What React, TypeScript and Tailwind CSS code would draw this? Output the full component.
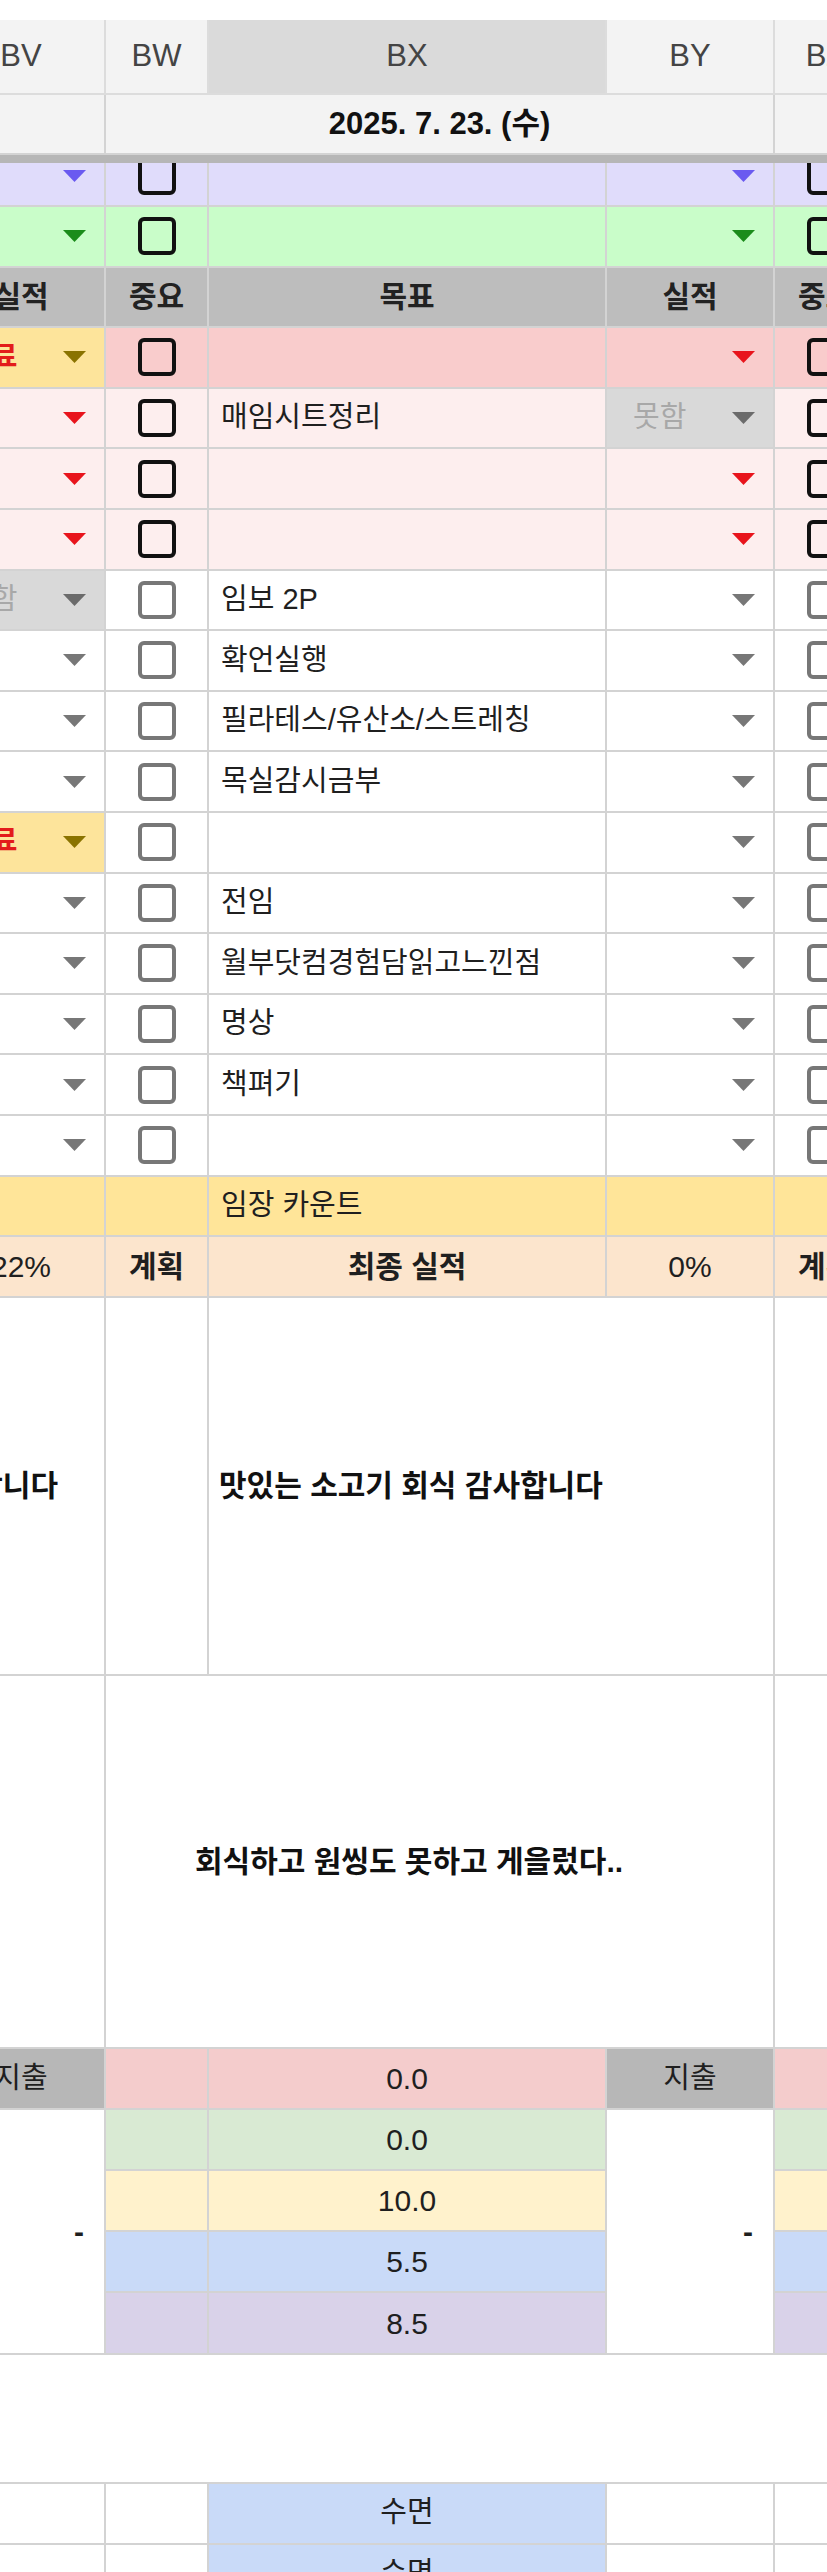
import type { ReactNode } from "react";

type Tone = "pink" | "light" | "white";
type Mark = "done" | "miss" | "none";

interface GoalRow {
  tone: Tone;
  bv: Mark;
  goal: string;
  by: Mark;
}

const goals: GoalRow[] = [
  { tone: "pink", bv: "done", goal: "", by: "none" },
  { tone: "light", bv: "none", goal: "매임시트정리", by: "miss" },
  { tone: "light", bv: "none", goal: "", by: "none" },
  { tone: "light", bv: "none", goal: "", by: "none" },
  { tone: "white", bv: "miss", goal: "임보 2P", by: "none" },
  { tone: "white", bv: "none", goal: "확언실행", by: "none" },
  { tone: "white", bv: "none", goal: "필라테스/유산소/스트레칭", by: "none" },
  { tone: "white", bv: "none", goal: "목실감시금부", by: "none" },
  { tone: "white", bv: "done", goal: "", by: "none" },
  { tone: "white", bv: "none", goal: "전임", by: "none" },
  { tone: "white", bv: "none", goal: "월부닷컴경험담읽고느낀점", by: "none" },
  { tone: "white", bv: "none", goal: "명상", by: "none" },
  { tone: "white", bv: "none", goal: "책펴기", by: "none" },
  { tone: "white", bv: "none", goal: "", by: "none" },
];

const toneBg: Record<Tone, string> = {
  pink: "bg-[#f9cccc]",
  light: "bg-[#fdeeee]",
  white: "bg-white",
};

// column widths incl. right gridline
const W = {
  bv: "w-[168px]",
  bw: "w-[103px]",
  bx: "w-[398px]",
  by: "w-[168px]",
  bz: "w-[103px]",
};

function Cell({
  w,
  bg = "bg-white",
  className = "",
  children,
}: {
  w: string;
  bg?: string;
  className?: string;
  children?: ReactNode;
}) {
  return (
    <div
      className={`${w} ${bg} shrink-0 h-full border-r-2 border-b-2 border-[#d3d3d3] flex items-center overflow-hidden ${className}`}
    >
      {children}
    </div>
  );
}

function Tri({ fill }: { fill: string }) {
  return (
    <svg width="23" height="12" viewBox="0 0 23 12" className="shrink-0">
      <polygon points="0,0 23,0 11.5,12" className={fill} />
    </svg>
  );
}

function Check({ dark }: { dark: boolean }) {
  return (
    <div
      className={`w-[38px] h-[38px] rounded-[6px] border-4 ${
        dark ? "border-[#111]" : "border-[#777]"
      }`}
    />
  );
}

function Dropdown({ w, mark, tone, triFill }: { w: string; mark: Mark; tone: Tone; triFill: string }) {
  if (mark === "done") {
    return (
      <Cell w={w} bg="bg-[#fde49b]" className="justify-between pl-[26px] pr-[18px]">
        <span className="text-[29px] font-bold text-[#e31b1b]">완료</span>
        <Tri fill="fill-[#8a7300]" />
      </Cell>
    );
  }
  if (mark === "miss") {
    return (
      <Cell w={w} bg="bg-[#d9d9d9]" className="justify-between pl-[26px] pr-[18px]">
        <span className="text-[29px] text-[#a8a8a8]">못함</span>
        <Tri fill="fill-[#6b6b6b]" />
      </Cell>
    );
  }
  return (
    <Cell w={w} bg={toneBg[tone]} className="justify-end pr-[18px]">
      <Tri fill={triFill} />
    </Cell>
  );
}

function Goal({ row }: { row: GoalRow }) {
  const dark = row.tone !== "white";
  const triFill = dark ? "fill-[#e8141c]" : "fill-[#777777]";
  const bg = toneBg[row.tone];
  return (
    <div className="flex h-[60.6px]">
      <Dropdown w={W.bv} mark={row.bv} tone={row.tone} triFill={triFill} />
      <Cell w={W.bw} bg={bg} className="justify-center">
        <Check dark={dark} />
      </Cell>
      <Cell w={W.bx} bg={bg} className="pl-[12px]">
        <span className="text-[29px] whitespace-nowrap">{row.goal}</span>
      </Cell>
      <Dropdown w={W.by} mark={row.by} tone={row.tone} triFill={triFill} />
      <Cell w={W.bz} bg={bg} className="justify-center">
        <Check dark={dark} />
      </Cell>
    </div>
  );
}

function ColorRow({ bg, tri, cb }: { bg: string; tri: string; cb: boolean }) {
  return (
    <div className="flex h-[60.6px]">
      <Cell w={W.bv} bg={bg} className="justify-end pr-[18px]">
        <Tri fill={tri} />
      </Cell>
      <Cell w={W.bw} bg={bg} className="justify-center">
        <Check dark={cb} />
      </Cell>
      <Cell w={W.bx} bg={bg} />
      <Cell w={W.by} bg={bg} className="justify-end pr-[18px]">
        <Tri fill={tri} />
      </Cell>
      <Cell w={W.bz} bg={bg} className="justify-center">
        <Check dark={cb} />
      </Cell>
    </div>
  );
}

export default function App() {
  return (
    <div className="w-[827px] h-[2572px] overflow-hidden bg-white text-[#1f1f1f] font-[family-name:Liberation_Sans,Noto_Sans_CJK_KR,sans-serif]">
      <div className="h-[20px]" />
      <div className="ml-[-62px] w-[940px]">
        {/* column letters */}
        <div className="flex h-[75px] text-[31px] text-[#444]">
          <Cell w={W.bv} bg="bg-[#f3f3f3]" className="justify-center border-[#dcdcdc]">BV</Cell>
          <Cell w={W.bw} bg="bg-[#f3f3f3]" className="justify-center border-[#dcdcdc]">BW</Cell>
          <Cell w={W.bx} bg="bg-[#dadada]" className="justify-center border-[#dcdcdc]">BX</Cell>
          <Cell w={W.by} bg="bg-[#f3f3f3]" className="justify-center border-[#dcdcdc]">BY</Cell>
          <Cell w={W.bz} bg="bg-[#f3f3f3]" className="justify-center border-[#dcdcdc]">BZ</Cell>
        </div>

        {/* date row */}
        <div className="flex h-[60px]">
          <Cell w={W.bv} bg="bg-[#f3f3f3]" className="border-b-0" />
          <Cell w="w-[669px]" bg="bg-[#f3f3f3]" className="justify-center border-b-0">
            <span className="text-[31px] font-bold text-[#111]">2025. 7. 23. (수)</span>
          </Cell>
          <Cell w={W.bz} bg="bg-[#f3f3f3]" className="border-b-0" />
        </div>
        <div className="h-[8px] bg-[#b6b6b6]" />

        {/* frozen area scrolled: purple row partly hidden */}
        <div className="h-[44px] overflow-hidden">
          <div className="mt-[-16.6px]">
            <ColorRow bg="bg-[#e0dcfb]" tri="fill-[#6a5af0]" cb={true} />
          </div>
        </div>
        <ColorRow bg="bg-[#c9fdc9]" tri="fill-[#1b8c1b]" cb={true} />

        {/* section header */}
        <div className="flex h-[60.6px] text-[30px] font-bold text-[#222]">
          <Cell w={W.bv} bg="bg-[#bdbdbd]" className="justify-center">실적</Cell>
          <Cell w={W.bw} bg="bg-[#bdbdbd]" className="justify-center">중요</Cell>
          <Cell w={W.bx} bg="bg-[#bdbdbd]" className="justify-center">목표</Cell>
          <Cell w={W.by} bg="bg-[#bdbdbd]" className="justify-center">실적</Cell>
          <Cell w={W.bz} bg="bg-[#bdbdbd]" className="justify-center">중요</Cell>
        </div>

        {goals.map((g, i) => (
          <Goal key={i} row={g} />
        ))}

        {/* counter row */}
        <div className="flex h-[60.6px] text-[29px]">
          <Cell w={W.bv} bg="bg-[#ffe599]" />
          <Cell w={W.bw} bg="bg-[#ffe599]" />
          <Cell w={W.bx} bg="bg-[#ffe599]" className="pl-[12px]">임장 카운트</Cell>
          <Cell w={W.by} bg="bg-[#ffe599]" />
          <Cell w={W.bz} bg="bg-[#ffe599]" />
        </div>

        {/* result row */}
        <div className="flex h-[60.6px]">
          <Cell w={W.bv} bg="bg-[#fce5cd]" className="justify-center text-[30px]">22%</Cell>
          <Cell w={W.bw} bg="bg-[#fce5cd]" className="justify-center text-[30px] font-bold">계획</Cell>
          <Cell w={W.bx} bg="bg-[#fce5cd]" className="justify-center text-[30px] font-bold">최종 실적</Cell>
          <Cell w={W.by} bg="bg-[#fce5cd]" className="justify-center text-[30px]">0%</Cell>
          <Cell w={W.bz} bg="bg-[#fce5cd]" className="justify-center text-[30px] font-bold">계획</Cell>
        </div>

        {/* notes */}
        <div className="flex h-[378px] text-[30px] font-bold text-[#111]">
          <Cell w={W.bv} className="justify-end pr-[46px] whitespace-nowrap">회식 감사합니다</Cell>
          <Cell w={W.bw} />
          <Cell w="w-[566px]" className="pl-[10px] whitespace-nowrap">맛있는 소고기 회식 감사합니다</Cell>
          <Cell w={W.bz} />
        </div>
        <div className="flex h-[373px] text-[30px] font-bold text-[#111]">
          <Cell w={W.bv} />
          <Cell w="w-[669px]" className="pl-[89px] whitespace-nowrap">회식하고 원씽도 못하고 게을렀다..</Cell>
          <Cell w={W.bz} />
        </div>

        {/* spending block */}
        <div className="grid grid-cols-[168px_103px_398px_168px_103px] grid-rows-[repeat(5,61.2px)] text-[30px]">
          <Cell w="w-auto" bg="bg-[#b7b7b7]" className="col-start-1 row-start-1 justify-center text-[29px]">지출</Cell>
          <Cell w="w-auto" bg="bg-[#f4cccc]" className="col-start-2 row-start-1" />
          <Cell w="w-auto" bg="bg-[#f4cccc]" className="col-start-3 row-start-1 justify-center">0.0</Cell>
          <Cell w="w-auto" bg="bg-[#b7b7b7]" className="col-start-4 row-start-1 justify-center text-[29px]">지출</Cell>
          <Cell w="w-auto" bg="bg-[#f4cccc]" className="col-start-5 row-start-1" />

          <Cell w="w-auto" className="col-start-1 row-start-2 row-span-4 justify-end pr-[20px] font-bold">-</Cell>
          <Cell w="w-auto" className="col-start-4 row-start-2 row-span-4 justify-end pr-[20px] font-bold">-</Cell>

          <Cell w="w-auto" bg="bg-[#d9ead3]" className="col-start-2 row-start-2" />
          <Cell w="w-auto" bg="bg-[#d9ead3]" className="col-start-3 row-start-2 justify-center">0.0</Cell>
          <Cell w="w-auto" bg="bg-[#d9ead3]" className="col-start-5 row-start-2" />

          <Cell w="w-auto" bg="bg-[#fff2cc]" className="col-start-2 row-start-3" />
          <Cell w="w-auto" bg="bg-[#fff2cc]" className="col-start-3 row-start-3 justify-center">10.0</Cell>
          <Cell w="w-auto" bg="bg-[#fff2cc]" className="col-start-5 row-start-3" />

          <Cell w="w-auto" bg="bg-[#c9daf8]" className="col-start-2 row-start-4" />
          <Cell w="w-auto" bg="bg-[#c9daf8]" className="col-start-3 row-start-4 justify-center">5.5</Cell>
          <Cell w="w-auto" bg="bg-[#c9daf8]" className="col-start-5 row-start-4" />

          <Cell w="w-auto" bg="bg-[#d9d2e9]" className="col-start-2 row-start-5" />
          <Cell w="w-auto" bg="bg-[#d9d2e9]" className="col-start-3 row-start-5 justify-center">8.5</Cell>
          <Cell w="w-auto" bg="bg-[#d9d2e9]" className="col-start-5 row-start-5" />
        </div>

        <div className="h-[129px] border-b-2 border-[#d3d3d3]" />

        {/* sleep rows */}
        {[0, 1].map((i) => (
          <div key={i} className="flex h-[61px] text-[29px]">
            <Cell w={W.bv} />
            <Cell w={W.bw} />
            <Cell w={W.bx} bg="bg-[#c9daf8]" className="justify-center">수면</Cell>
            <Cell w={W.by} />
            <Cell w={W.bz} />
          </div>
        ))}
      </div>
    </div>
  );
}
